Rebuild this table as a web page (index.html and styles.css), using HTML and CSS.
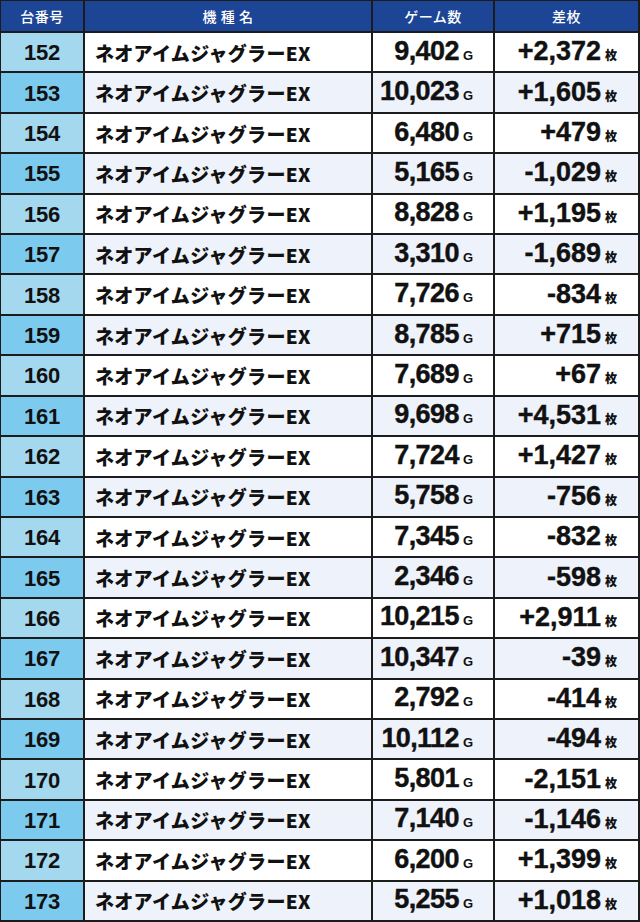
FILE: index.html
```html
<!DOCTYPE html>
<html lang="ja">
<head>
<meta charset="utf-8">
<title>データ</title>
<link rel="stylesheet" href="styles.css">
</head>
<body>
<div class="grid" id="grid">
  <div class="hd">台番号</div>
  <div class="hd">機 種 名</div>
  <div class="hd">ゲーム数</div>
  <div class="hd">差枚</div>

  <div class="no odd">152</div><div class="nm odd">ネオアイムジャグラーEX</div><div class="gm odd"><span class="v">9,402<span class="u">G</span></span></div><div class="df odd"><span class="v">+2,372<span class="u">枚</span></span></div>
  <div class="no even">153</div><div class="nm even">ネオアイムジャグラーEX</div><div class="gm even"><span class="v">10,023<span class="u">G</span></span></div><div class="df even"><span class="v">+1,605<span class="u">枚</span></span></div>
  <div class="no odd">154</div><div class="nm odd">ネオアイムジャグラーEX</div><div class="gm odd"><span class="v">6,480<span class="u">G</span></span></div><div class="df odd"><span class="v">+479<span class="u">枚</span></span></div>
  <div class="no even">155</div><div class="nm even">ネオアイムジャグラーEX</div><div class="gm even"><span class="v">5,165<span class="u">G</span></span></div><div class="df even"><span class="v">-1,029<span class="u">枚</span></span></div>
  <div class="no odd">156</div><div class="nm odd">ネオアイムジャグラーEX</div><div class="gm odd"><span class="v">8,828<span class="u">G</span></span></div><div class="df odd"><span class="v">+1,195<span class="u">枚</span></span></div>
  <div class="no even">157</div><div class="nm even">ネオアイムジャグラーEX</div><div class="gm even"><span class="v">3,310<span class="u">G</span></span></div><div class="df even"><span class="v">-1,689<span class="u">枚</span></span></div>
  <div class="no odd">158</div><div class="nm odd">ネオアイムジャグラーEX</div><div class="gm odd"><span class="v">7,726<span class="u">G</span></span></div><div class="df odd"><span class="v">-834<span class="u">枚</span></span></div>
  <div class="no even">159</div><div class="nm even">ネオアイムジャグラーEX</div><div class="gm even"><span class="v">8,785<span class="u">G</span></span></div><div class="df even"><span class="v">+715<span class="u">枚</span></span></div>
  <div class="no odd">160</div><div class="nm odd">ネオアイムジャグラーEX</div><div class="gm odd"><span class="v">7,689<span class="u">G</span></span></div><div class="df odd"><span class="v">+67<span class="u">枚</span></span></div>
  <div class="no even">161</div><div class="nm even">ネオアイムジャグラーEX</div><div class="gm even"><span class="v">9,698<span class="u">G</span></span></div><div class="df even"><span class="v">+4,531<span class="u">枚</span></span></div>
  <div class="no odd">162</div><div class="nm odd">ネオアイムジャグラーEX</div><div class="gm odd"><span class="v">7,724<span class="u">G</span></span></div><div class="df odd"><span class="v">+1,427<span class="u">枚</span></span></div>
  <div class="no even">163</div><div class="nm even">ネオアイムジャグラーEX</div><div class="gm even"><span class="v">5,758<span class="u">G</span></span></div><div class="df even"><span class="v">-756<span class="u">枚</span></span></div>
  <div class="no odd">164</div><div class="nm odd">ネオアイムジャグラーEX</div><div class="gm odd"><span class="v">7,345<span class="u">G</span></span></div><div class="df odd"><span class="v">-832<span class="u">枚</span></span></div>
  <div class="no even">165</div><div class="nm even">ネオアイムジャグラーEX</div><div class="gm even"><span class="v">2,346<span class="u">G</span></span></div><div class="df even"><span class="v">-598<span class="u">枚</span></span></div>
  <div class="no odd">166</div><div class="nm odd">ネオアイムジャグラーEX</div><div class="gm odd"><span class="v">10,215<span class="u">G</span></span></div><div class="df odd"><span class="v">+2,911<span class="u">枚</span></span></div>
  <div class="no even">167</div><div class="nm even">ネオアイムジャグラーEX</div><div class="gm even"><span class="v">10,347<span class="u">G</span></span></div><div class="df even"><span class="v">-39<span class="u">枚</span></span></div>
  <div class="no odd">168</div><div class="nm odd">ネオアイムジャグラーEX</div><div class="gm odd"><span class="v">2,792<span class="u">G</span></span></div><div class="df odd"><span class="v">-414<span class="u">枚</span></span></div>
  <div class="no even">169</div><div class="nm even">ネオアイムジャグラーEX</div><div class="gm even"><span class="v">10,112<span class="u">G</span></span></div><div class="df even"><span class="v">-494<span class="u">枚</span></span></div>
  <div class="no odd">170</div><div class="nm odd">ネオアイムジャグラーEX</div><div class="gm odd"><span class="v">5,801<span class="u">G</span></span></div><div class="df odd"><span class="v">-2,151<span class="u">枚</span></span></div>
  <div class="no even">171</div><div class="nm even">ネオアイムジャグラーEX</div><div class="gm even"><span class="v">7,140<span class="u">G</span></span></div><div class="df even"><span class="v">-1,146<span class="u">枚</span></span></div>
  <div class="no odd">172</div><div class="nm odd">ネオアイムジャグラーEX</div><div class="gm odd"><span class="v">6,200<span class="u">G</span></span></div><div class="df odd"><span class="v">+1,399<span class="u">枚</span></span></div>
  <div class="no even">173</div><div class="nm even">ネオアイムジャグラーEX</div><div class="gm even"><span class="v">5,255<span class="u">G</span></span></div><div class="df even"><span class="v">+1,018<span class="u">枚</span></span></div>
</div>
</body>
</html>
```

FILE: styles.css
```css
html, body {
  margin: 0;
  padding: 0;
  background: #ffffff;
}

.grid {
  box-sizing: border-box;
  width: 640px;
  height: 922px;
  display: grid;
  grid-template-columns: 82px 286px 120px 143px;
  grid-template-rows: 30px repeat(22, 1fr);
  gap: 2px;
  padding: 1px 2px 2px 1px;
  background: #1c1c1c;
}

.grid > div {
  display: flex;
  align-items: center;
  min-width: 0;
  overflow: hidden;
  white-space: nowrap;
  color: #111111;
}

.hd {
  background: #1d4596;
  justify-content: center;
  font-family: "Noto Sans CJK JP", "Noto Sans", sans-serif;
  font-weight: 500;
  font-size: 14px;
  color: #ffffff !important;
  letter-spacing: 0.5px;
}

.odd { background: #ffffff; }
.even { background: #eef2fa; }

.no {
  justify-content: center;
  padding-top: 2px;
  box-sizing: border-box;
  font-family: "Liberation Sans", Arial, sans-serif;
  font-weight: 700;
  font-size: 22px;
  letter-spacing: -0.3px;
}
.no.odd { background: #a3d8ee; }
.no.even { background: #7ccbef; }

.nm {
  padding-left: 10px;
  font-family: "Noto Sans CJK JP", sans-serif;
  font-weight: 900;
  font-size: 19px;
  letter-spacing: 0.3px;
}

.gm, .df {
  justify-content: flex-end;
  box-sizing: border-box;
  padding-top: 2px;
  font-family: "Liberation Sans", Arial, sans-serif;
  font-weight: 700;
  font-size: 27px;
  letter-spacing: -0.6px;
  -webkit-text-stroke: 0.4px #111111;
}
.gm { padding-right: 20px; }
.df { padding-right: 21px; letter-spacing: 0; }

.v {
  line-height: 30px;
}

.u {
  font-size: 13px;
  margin-left: 4px;
  letter-spacing: 0;
  -webkit-text-stroke: 0;
  font-family: "Liberation Sans", "Noto Sans CJK JP", sans-serif;
  font-weight: 700;
}
.df .u {
  font-family: "Noto Sans CJK JP", sans-serif;
  font-size: 12px;
  font-weight: 900;
}
```
